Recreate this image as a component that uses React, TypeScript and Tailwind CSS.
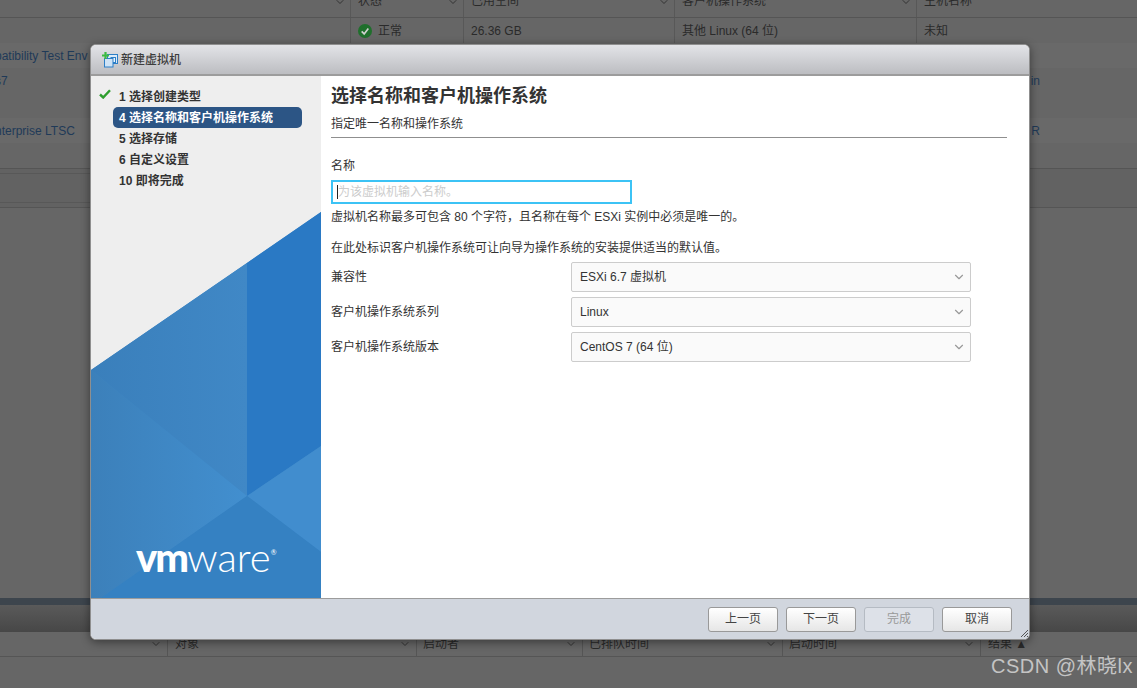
import { ChevronDown } from "lucide-react";

const font = "font-['Liberation_Sans','Noto_Sans_CJK_SC',sans-serif]";

const steps = [
  { label: "1 选择创建类型", done: true },
  { label: "4 选择名称和客户机操作系统", active: true },
  { label: "5 选择存储" },
  { label: "6 自定义设置" },
  { label: "10 即将完成" },
];

const fields = [
  { label: "兼容性", value: "ESXi 6.7 虚拟机" },
  { label: "客户机操作系统系列", value: "Linux" },
  { label: "客户机操作系统版本", value: "CentOS 7 (64 位)" },
];

function BackRow({ first, second, shaded }: { first?: string; second?: string; shaded?: boolean }) {
  return (
    <div className={`flex h-[25px] items-center justify-between text-xs text-[#1f3a58] ${shaded ? "bg-[#696969]" : ""}`}>
      <span className="-ml-[5px]">{first}</span>
      <span className="mr-[97px]">{second}</span>
    </div>
  );
}

function HeadCell({ width, label, chevron }: { width: string; label: string; chevron?: boolean }) {
  return (
    <div className={`flex h-full items-start justify-between border-l border-[#585858] pl-[7px] pr-[4px] leading-[3px] ${width}`}>
      {label}
      {chevron && <ChevronDown size={12} className="-mt-[4px] text-[#333]" />}
    </div>
  );
}

function TaskCell({ width, label, pad }: { width: string; label: string; pad: string }) {
  return (
    <div className={`flex h-full items-center justify-between border-l border-[#555] pr-[5px] ${pad} ${width}`}>
      {label}
      <ChevronDown size={12} className="text-[#333]" />
    </div>
  );
}

function Background() {
  return (
    <div className="flex h-full flex-col text-xs text-[#2a2a2a]">
      <div className="flex h-[18px] border-b border-[#555]">
        <div className="flex h-full w-[350px] items-start justify-end pr-[4px]">
          <ChevronDown size={12} className="-mt-[4px] text-[#333]" />
        </div>
        <HeadCell width="w-[113px]" label="状态" chevron />
        <HeadCell width="w-[211px]" label="已用空间" chevron />
        <HeadCell width="w-[242px]" label="客户机操作系统" chevron />
        <HeadCell width="" label="主机名称" />
      </div>
      <div className="flex h-[25px] items-center">
        <div className="w-[350px]" />
        <div className="flex h-full w-[113px] items-center gap-[6px] border-l border-[#585858] pl-[7px]">
          <span className="flex h-[14px] w-[14px] items-center justify-center rounded-full bg-[#1f6f2c]">
            <svg viewBox="0 0 12 12" className="h-[10px] w-[10px]" fill="none" stroke="#d0d0d0" strokeWidth="2">
              <path d="M2 6.5 5 9.5 10 3" />
            </svg>
          </span>
          正常
        </div>
        <div className="flex h-full w-[211px] items-center border-l border-[#585858] pl-[7px]">26.36 GB</div>
        <div className="flex h-full w-[242px] items-center border-l border-[#585858] pl-[7px]">其他 Linux (64 位)</div>
        <div className="flex h-full items-center border-l border-[#585858] pl-[7px]">未知</div>
      </div>
      <BackRow first="patibility Test Env" shaded />
      <BackRow first="s7" second="in" />
      <BackRow />
      <BackRow first="nterprise LTSC" second="R" shaded />
      <BackRow />
      <div className="h-[40px] border-y border-[#555] bg-[#626262]">
        <div className="mt-[4px] h-[30px] w-[600px] border-y border-[#585858]" />
      </div>
      <div className="flex-1" />
      <div className="h-[7px] bg-[#3d454d]" />
      <div className="h-[27px] bg-gradient-to-b from-[#5a5a5a] to-[#474747]" />
      <div className="flex h-[25px] items-center border-b border-[#555]">
        <div className="flex h-full w-[167px] items-center justify-end pr-[5px]">
          <ChevronDown size={12} className="text-[#333]" />
        </div>
        <TaskCell width="w-[249px]" label="对象" pad="pl-[7px]" />
        <TaskCell width="w-[166px]" label="启动者" pad="pl-[6px]" />
        <TaskCell width="w-[200px]" label="已排队时间" pad="pl-[6px]" />
        <TaskCell width="w-[198px]" label="启动时间" pad="pl-[6px]" />
        <div className="flex h-full items-center border-l border-[#555] pl-[7px]">结果 ▲</div>
      </div>
      <div className="h-[31px]" />
    </div>
  );
}

function SideArt() {
  return (
    <svg viewBox="0 0 230 386" className="absolute bottom-0 left-0 h-[386px] w-[230px]">
      <defs>
        <linearGradient id="midLeft" x1="0" x2="1" y1="0" y2="0">
          <stop offset="0" stopColor="#3a7fbb" />
          <stop offset="1" stopColor="#4088c6" />
        </linearGradient>
        <linearGradient id="lowLeft" x1="0" x2="1" y1="0" y2="0">
          <stop offset="0" stopColor="#3c80ba" />
          <stop offset="1" stopColor="#428fcf" />
        </linearGradient>
      </defs>
      <polygon points="0,158 230,0 230,386 0,386" fill="#3b84c3" />
      <polygon points="0,158 156,51 156,284" fill="url(#midLeft)" />
      <polygon points="0,158 156,284 10,386 0,386" fill="url(#lowLeft)" />
      <polygon points="156,51 230,0 230,234 156,284" fill="#2a79c4" />
      <polygon points="156,284 230,234 230,340" fill="#418dce" />
      <polygon points="10,386 156,284 230,340 230,386" fill="#3581c2" />
    </svg>
  );
}

function NewVmIcon() {
  return (
    <svg viewBox="0 0 16 16" className="h-4 w-4">
      <rect x="5.5" y="2.5" width="10" height="9" fill="#dcebf8" stroke="#2d7fc7" />
      <rect x="9" y="5.5" width="4.5" height="5" fill="#f3f8fd" stroke="#2d7fc7" />
      <rect x="2.5" y="6.5" width="8.5" height="8.5" fill="#cfe3f5" stroke="#2d7fc7" />
      <path d="M3.5 0v7M0 3.5h7" stroke="#3dbb42" strokeWidth="2.2" />
    </svg>
  );
}

function Wizard() {
  return (
    <div className="absolute left-[90px] top-[44px] flex h-[596px] w-[940px] flex-col overflow-hidden rounded-[6px] border border-[#8f8f8f] bg-white shadow-[0_2px_10px_rgba(0,0,0,0.45)]">
      <div className="flex h-[31px] shrink-0 items-center gap-[3px] border-b-2 border-[#9c9c9c] bg-gradient-to-b from-[#e3e4e8] to-[#bcbdc1] pl-[11px] pt-[1px] text-xs font-medium text-[#3d3d3d]">
        <NewVmIcon />
        新建虚拟机
      </div>
      <div className="flex min-h-0 flex-1">
        <div className="relative w-[230px] shrink-0 bg-[#eeeeee]">
          <div className="relative z-10 pl-[22px] pr-[19px] pt-[10px] text-xs font-bold text-[#333]">
            {steps.map((s) => (
              <div
                key={s.label}
                className={`relative flex h-[21px] items-center rounded-[5px] pl-[6px] ${s.active ? "bg-[#2c5585] text-white" : ""}`}
              >
                {s.done && (
                  <svg viewBox="0 0 12 10" className="absolute left-[-14px] top-[3px] h-[10px] w-[12px]" fill="none" stroke="#2e9e2e" strokeWidth="2.4">
                    <path d="M1 5.5 4.2 8.5 11 1.2" />
                  </svg>
                )}
                {s.label}
              </div>
            ))}
          </div>
          <SideArt />
          <div className="absolute bottom-[21px] left-[45px] z-10 flex items-start font-['Lato',sans-serif] text-[40px] leading-[40px] text-white">
            <span className="font-black tracking-[-2px]">vm</span>
            <span className="font-light">ware</span>
            <span className="mt-[12px] text-[7px] leading-[7px]">®</span>
          </div>
        </div>
        <div className="min-w-0 flex-1 pl-[10px] pr-[22px] pt-[8px] text-xs text-[#333]">
          <h1 className="text-lg font-bold leading-[24px] text-[#333]">选择名称和客户机操作系统</h1>
          <div className="mt-[7px] h-[19px] leading-[18px]">指定唯一名称和操作系统</div>
          <div className="mt-[3px] border-t border-[#8f8f8f]" />
          <label className="mt-[20px] block leading-[16px]">名称</label>
          <div className="relative mt-[6px] w-[301px]">
            <input
              placeholder="为该虚拟机输入名称。"
              className="block h-[24px] w-full border-2 border-[#3cc3f5] pl-[5px] text-xs outline-none placeholder:text-[#cccccc]"
            />
            <span className="absolute left-[6px] top-[5px] h-[14px] w-px bg-[#222]" />
          </div>
          <p className="mt-[5px] leading-[16px]">虚拟机名称最多可包含 80 个字符，且名称在每个 ESXi 实例中必须是唯一的。</p>
          <p className="mt-[15px] leading-[16px]">在此处标识客户机操作系统可让向导为操作系统的安装提供适当的默认值。</p>
          <div className="mt-[6px] flex flex-col gap-[5px]">
            {fields.map((f) => (
              <div key={f.label} className="flex items-center">
                <span className="w-[240px]">{f.label}</span>
                <div className="flex h-[30px] w-[400px] items-center justify-between rounded-[2px] border border-[#cccccc] bg-[#fafafa] pl-[8px] pr-[4px]">
                  {f.value}
                  <ChevronDown size={14} className="text-[#999]" />
                </div>
              </div>
            ))}
          </div>
        </div>
      </div>
      <div className="relative flex h-[41px] shrink-0 items-center justify-end gap-[8px] border-t border-[#9c9c9c] bg-[#d1d6de] pr-[17px] text-xs">
        {["上一页", "下一页"].map((b) => (
          <button key={b} className="h-[25px] w-[70px] rounded-[3px] border border-[#999] bg-gradient-to-b from-white to-[#e6e6e6] text-[#444]">
            {b}
          </button>
        ))}
        <button disabled className="h-[25px] w-[70px] rounded-[3px] border border-[#b5bbc3] bg-[#dde1e8] text-[#999]">
          完成
        </button>
        <button className="h-[25px] w-[70px] rounded-[3px] border border-[#999] bg-gradient-to-b from-white to-[#e6e6e6] text-[#444]">
          取消
        </button>
        <svg viewBox="0 0 7 7" className="absolute bottom-[2px] right-[1px] h-[7px] w-[7px]" stroke="#555" strokeWidth="1">
          <path d="M0 7 7 0M3 7 7 3M6 7 7 6" />
        </svg>
      </div>
    </div>
  );
}

export default function App() {
  return (
    <div className={`relative h-[688px] w-full overflow-hidden bg-[#666666] ${font}`}>
      <Background />
      <Wizard />
      <div className="absolute bottom-[10px] right-[4px] text-xl leading-6 tracking-[0.5px] text-[#c4c4c4]">CSDN @林晓lx</div>
    </div>
  );
}
